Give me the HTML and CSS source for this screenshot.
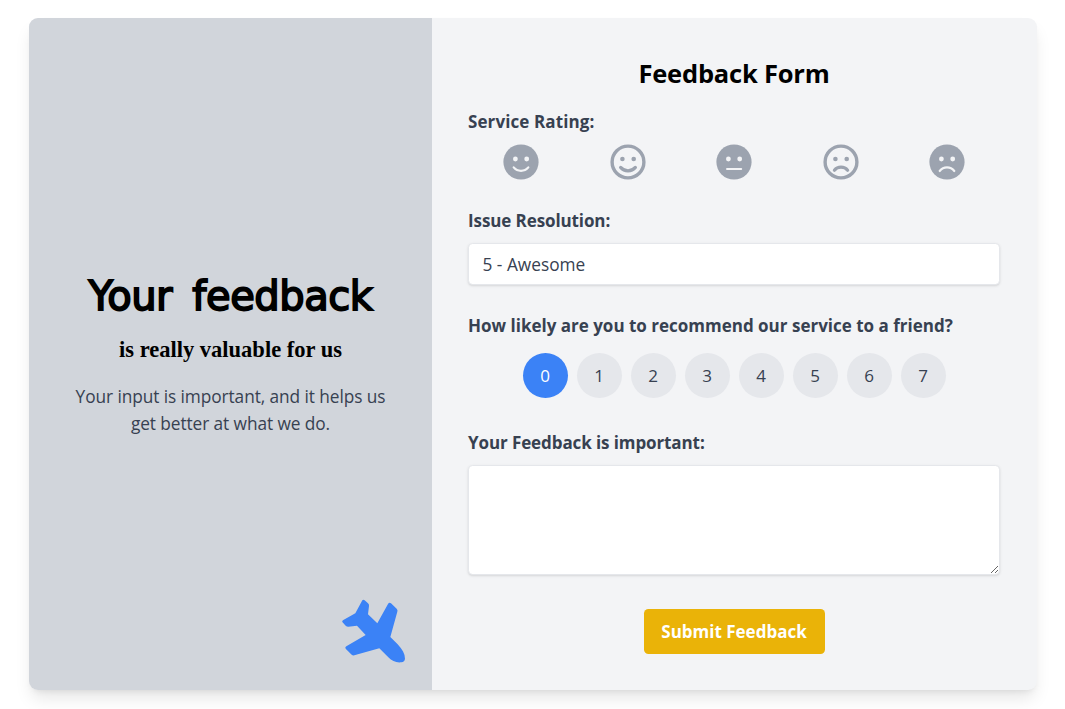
FILE: index.html
```html
<!DOCTYPE html>
<html lang="en">
<head>
<meta charset="utf-8">
<title>Feedback Form</title>
<link rel="stylesheet" href="styles.css">
</head>
<body>
<main class="card">
  <section class="intro">
    <h1 class="intro-title">Your feedback</h1>
    <h2 class="intro-subtitle">is really valuable for us</h2>
    <p class="intro-text"><span class="line-one">Your input is important, and it helps us</span><br><span class="line-two">get better at what we do.</span></p>
    <svg class="plane" viewBox="60 55 200 200"><path d="M127 62Q130 58 134 62L144 71Q148 74 147 79L144 104L172 131L204 73Q208 66 213 71L230 87Q234 91 232 96L211 172L233 194C247 209 255 223 255 237Q254 247 244 248C229 250 216 244 205 233L178 206L103 227Q98 228 95 225L77 207Q74 203 79 200L137 166L111 138L85 141Q80 141 77 138L67 127Q65 124 70 121L106 101Z"/></svg>
  </section>
  <form class="form">
    <h2 class="form-title"><span>Feedback Form</span></h2>
    <div class="field rating">
      <div class="label"><span class="t-service">Service Rating:</span></div>
      <div class="faces">
        <svg class="face" viewBox="0 0 36 36"><circle class="solid" cx="18" cy="18" r="17.6"/><circle class="cut" cx="12.4" cy="15" r="2.4"/><circle class="cut" cx="23.7" cy="15" r="2.4"/><path class="cut-line" d="M10.7 23.4c3.8 4.6 10.8 4.6 14.6 0"/></svg>
        <svg class="face" viewBox="0 0 36 36"><circle class="ring" cx="18" cy="18" r="15.9"/><circle class="solid" cx="12.4" cy="15" r="2.3"/><circle class="solid" cx="23.7" cy="15" r="2.3"/><path class="ink-line" d="M10.6 23.4c3.8 4.5 11 4.5 14.8 0"/></svg>
        <svg class="face" viewBox="0 0 36 36"><circle class="solid" cx="18" cy="18" r="17.6"/><circle class="cut" cx="12.4" cy="15" r="2.4"/><circle class="cut" cx="23.7" cy="15" r="2.4"/><path class="cut-line" d="M11.1 25h14"/></svg>
        <svg class="face" viewBox="0 0 36 36"><circle class="ring" cx="18" cy="18" r="15.9"/><circle class="solid" cx="12.4" cy="15" r="2.3"/><circle class="solid" cx="23.7" cy="15" r="2.3"/><path class="ink-line" d="M11.4 26.2c3.2-4 10-4 13.2 0"/></svg>
        <svg class="face" viewBox="0 0 36 36"><circle class="solid" cx="18" cy="18" r="17.6"/><circle class="cut" cx="12.4" cy="15" r="2.4"/><circle class="cut" cx="23.7" cy="15" r="2.4"/><path class="cut-line" d="M10.7 27c3.8-4.8 10.8-4.8 14.6 0"/></svg>
      </div>
    </div>
    <div class="field issue">
      <div class="label"><span class="t-issue">Issue Resolution:</span></div>
      <div class="select"><span>5 - Awesome</span></div>
    </div>
    <div class="field recommend">
      <div class="label"><span class="t-friend">How likely are you to recommend our service to a friend?</span></div>
      <div class="scores">
        <button type="button" class="score active">0</button>
        <button type="button" class="score">1</button>
        <button type="button" class="score">2</button>
        <button type="button" class="score">3</button>
        <button type="button" class="score">4</button>
        <button type="button" class="score">5</button>
        <button type="button" class="score">6</button>
        <button type="button" class="score">7</button>
      </div>
    </div>
    <div class="field message">
      <div class="label"><span class="t-important">Your Feedback is important:</span></div>
      <textarea class="textarea"></textarea>
    </div>
    <button type="button" class="submit"><span>Submit Feedback</span></button>
  </form>
</main>
</body>
</html>
```
FILE: styles.css
```css
* { box-sizing: border-box; margin: 0; padding: 0; }
body {
  min-height: 709px;
  padding: 18px 0 0 29px;
  background: #fff;
  color: #374151;
  font-family: "Segoe UI", "Open Sans", "Noto Sans", sans-serif;
  font-size: 17px;
  line-height: 27px;
}
button, textarea { font: inherit; border: 0; }
span { white-space: nowrap; }

.card {
  display: flex;
  width: 1008px;
  height: 672px;
  border-radius: 9px;
  background: #f3f4f6;
  box-shadow: 0 11px 17px -3px rgba(0, 0, 0, .1), 0 4px 7px -4px rgba(0, 0, 0, .1);
}

.intro {
  position: relative;
  display: flex;
  flex-direction: column;
  align-items: center;
  justify-content: center;
  width: 403px;
  background: #d1d5db;
  border-radius: 9px 0 0 9px;
  text-align: center;
}
.intro-title {
  color: #000;
  font: 400 40px/45px "Comic Sans MS", "DejaVu Sans", sans-serif;
  white-space: nowrap;
  letter-spacing: -.45px;
  word-spacing: 8px;
  -webkit-text-stroke: 1.8px #000;
  stroke-linejoin: round;
  padding-top: 3px;
  margin-bottom: 15px;
}
.intro-subtitle {
  color: #000;
  font: 700 22.5px/31px "Liberation Serif", serif;
  margin-bottom: 18px;
}
.intro-text { font-size: 17.3px; letter-spacing: -.08px; }
.plane {
  position: absolute;
  right: 25.3px;
  bottom: 25px;
  width: 66.67px;
  height: 66.67px;
  fill: #3b82f6;
}

.form {
  display: flex;
  flex-direction: column;
  width: 605px;
  padding: 37px 37px 36px 36px;
}
.form-title {
  color: #000;
  font-size: 25.5px;
  line-height: 36px;
  font-weight: 700;
  letter-spacing: -.2px;
  text-align: center;
  margin-bottom: 17px;
}
.label { font-weight: 700; margin-bottom: 9px; }
.rating { margin-bottom: 27px; }
.issue { margin-bottom: 27px; }
.recommend { margin-bottom: 31px; }
.recommend .label { margin-bottom: 14px; }
.message { margin-bottom: 34px; }
.t-issue, .t-important { letter-spacing: -.1px; }
.t-service { letter-spacing: .1px; }

.faces { display: grid; grid-template-columns: repeat(5, 1fr); justify-items: center; }
.face { display: block; width: 36px; height: 36px; }
.face:nth-child(4) { margin-left: 1px; }
.solid { fill: #9ca3af; }
.cut { fill: #f3f4f6; }
.ring { fill: none; stroke: #9ca3af; stroke-width: 3.4; }
.cut-line, .ink-line { fill: none; stroke-linecap: round; }
.cut-line { stroke: #f3f4f6; stroke-width: 2.2; }
.ink-line { stroke: #9ca3af; stroke-width: 3.2; }

.select, .textarea {
  display: block;
  width: 532px;
  background: #fff;
  border: 1px solid #e5e7eb;
  border-radius: 4.5px;
  box-shadow: 0 1px 3px rgba(0, 0, 0, .1), 0 1px 2px -1px rgba(0, 0, 0, .1);
}
.select { height: 42px; padding: 7px 13.5px; font-size: 17.3px; }
.textarea { height: 110px; resize: vertical; }

.scores { display: flex; justify-content: center; gap: 9px; }
.score {
  width: 45px;
  height: 45px;
  border-radius: 50%;
  background: #e5e7eb;
  color: #374151;
}
.active { background: #3b82f6; color: #fff; }

.submit {
  align-self: center;
  width: 181px;
  height: 45px;
  border-radius: 4.5px;
  background: #eab308;
  color: #fff;
  font-weight: 700;
}
```
